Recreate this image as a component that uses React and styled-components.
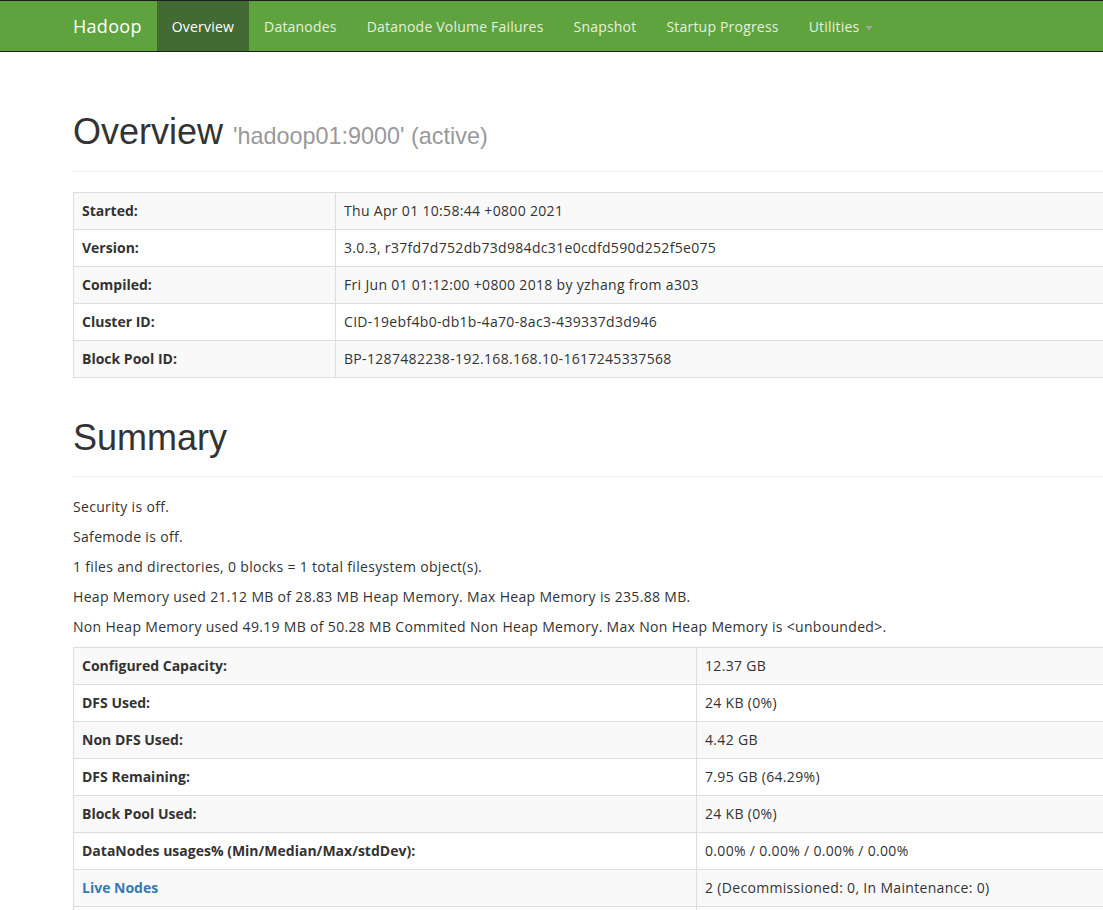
import React from "react";
import styled, { createGlobalStyle } from "styled-components";

const GlobalStyle = createGlobalStyle`
  html, body {
    margin: 0;
    padding: 0;
    background: #fff;
    overflow-x: hidden;
  }
  body {
    font-family: "Open Sans", "Noto Sans", sans-serif;
    font-size: 14px;
    line-height: 20px;
    color: #333;
  }
  * {
    box-sizing: border-box;
  }
`;

const navItems = [
  { label: "Overview", active: true },
  { label: "Datanodes" },
  { label: "Datanode Volume Failures" },
  { label: "Snapshot" },
  { label: "Startup Progress" },
  { label: "Utilities", dropdown: true },
];

const overview = [
  ["Started:", "Thu Apr 01 10:58:44 +0800 2021"],
  ["Version:", "3.0.3, r37fd7d752db73d984dc31e0cdfd590d252f5e075"],
  ["Compiled:", "Fri Jun 01 01:12:00 +0800 2018 by yzhang from a303"],
  ["Cluster ID:", "CID-19ebf4b0-db1b-4a70-8ac3-439337d3d946"],
  ["Block Pool ID:", "BP-1287482238-192.168.168.10-1617245337568"],
];

const summaryLines = [
  "Security is off.",
  "Safemode is off.",
  "1 files and directories, 0 blocks = 1 total filesystem object(s).",
  "Heap Memory used 21.12 MB of 28.83 MB Heap Memory. Max Heap Memory is 235.88 MB.",
  "Non Heap Memory used 49.19 MB of 50.28 MB Commited Non Heap Memory. Max Non Heap Memory is <unbounded>.",
];

const summary = [
  ["Configured Capacity:", "12.37 GB"],
  ["DFS Used:", "24 KB (0%)"],
  ["Non DFS Used:", "4.42 GB"],
  ["DFS Remaining:", "7.95 GB (64.29%)"],
  ["Block Pool Used:", "24 KB (0%)"],
  ["DataNodes usages% (Min/Median/Max/stdDev):", "0.00% / 0.00% / 0.00% / 0.00%"],
  ["Live Nodes", "2 (Decommissioned: 0, In Maintenance: 0)", true],
  ["Dead Nodes", "0 (Decommissioned: 0, In Maintenance: 0)", true],
];

const App = () => {
  return (
    <>
      <GlobalStyle />
      <Navbar>
        <NavInner>
          <Brand>Hadoop</Brand>
          <NavList>
            {navItems.map((item) => (
              <NavItem key={item.label} $active={item.active}>
                {item.label}
                {item.dropdown && <Caret />}
              </NavItem>
            ))}
          </NavList>
        </NavInner>
      </Navbar>

      <Container>
        <PageHeader>
          <Title>
            Overview <Small>'hadoop01:9000' (active)</Small>
          </Title>
        </PageHeader>

        <Table>
          <tbody>
            {overview.map(([k, v]) => (
              <tr key={k}>
                <Th $width={262}>{k}</Th>
                <Td>{v}</Td>
              </tr>
            ))}
          </tbody>
        </Table>

        <PageHeader>
          <Title>Summary</Title>
        </PageHeader>

        {summaryLines.map((line) => (
          <Para key={line}>{line}</Para>
        ))}

        <Table>
          <tbody>
            {summary.map(([k, v, link]) => (
              <tr key={k}>
                <Th $width={623}>{link ? <Link>{k}</Link> : k}</Th>
                <Td>{v}</Td>
              </tr>
            ))}
          </tbody>
        </Table>
      </Container>
    </>
  );
};

const Navbar = styled.nav`
  background-color: #5fa33e;
  border-top: 1px solid #1e1e1e;
  border-bottom: 1px solid #1e1e1e;
  height: 52px;
`;

const NavInner = styled.div`
  margin-left: 58px;
  display: flex;
  height: 50px;
`;

const Brand = styled.div`
  padding: 1px 15px 0;
  font-size: 18px;
  letter-spacing: 0.3px;
  line-height: 49px;
  color: #fff;
`;

const NavList = styled.ul`
  display: flex;
  list-style: none;
  margin: 0;
  padding: 0;
`;

const NavItem = styled.li`
  padding: 1px 15px 0;
  font-size: 14px;
  letter-spacing: 0.2px;
  line-height: 49px;
  color: ${(p) => (p.$active ? "#fff" : "#e4f0de")};
  background-color: ${(p) => (p.$active ? "#446a34" : "transparent")};
  display: flex;
  align-items: center;
`;

const Caret = styled.span`
  display: inline-block;
  width: 0;
  height: 0;
  margin-left: 6px;
  margin-top: 2px;
  border-top: 4px solid #a3a3a3;
  border-left: 4px solid transparent;
  border-right: 4px solid transparent;
`;

const Container = styled.div`
  width: 1170px;
  margin-left: 58px;
  padding: 60px 15px 0;
`;

const PageHeader = styled.div`
  padding-bottom: 9px;
  margin-bottom: 20px;
  border-bottom: 1px solid #eee;
  table + & {
    margin-top: 40px;
  }
`;

const Title = styled.h1`
  margin: 0 0 10px;
  font-family: "Liberation Sans", Arial, sans-serif;
  font-size: 36px;
  font-weight: 500;
  line-height: 1.1;
  color: #333;
`;

const Small = styled.small`
  font-size: 65%;
  font-weight: 400;
  color: #999;
`;

const Table = styled.table`
  width: 100%;
  border-collapse: collapse;
  border-spacing: 0;
  border: 1px solid #ddd;
  margin-bottom: 20px;

  tr:nth-child(odd) {
    background-color: #f9f9f9;
  }
`;

const Th = styled.th`
  width: ${(p) => p.$width}px;
  padding: 8px;
  border: 1px solid #ddd;
  text-align: left;
  font-weight: 700;
  line-height: 20px;
  vertical-align: top;
`;

const Td = styled.td`
  padding: 8px;
  border: 1px solid #ddd;
  line-height: 20px;
  letter-spacing: 0.32px;
  vertical-align: top;
`;

const Link = styled.a`
  color: #337ab7;
  text-decoration: none;
  cursor: pointer;
`;

const Para = styled.p`
  margin: 0 0 10px;
  letter-spacing: 0.32px;
`;

export default App;
